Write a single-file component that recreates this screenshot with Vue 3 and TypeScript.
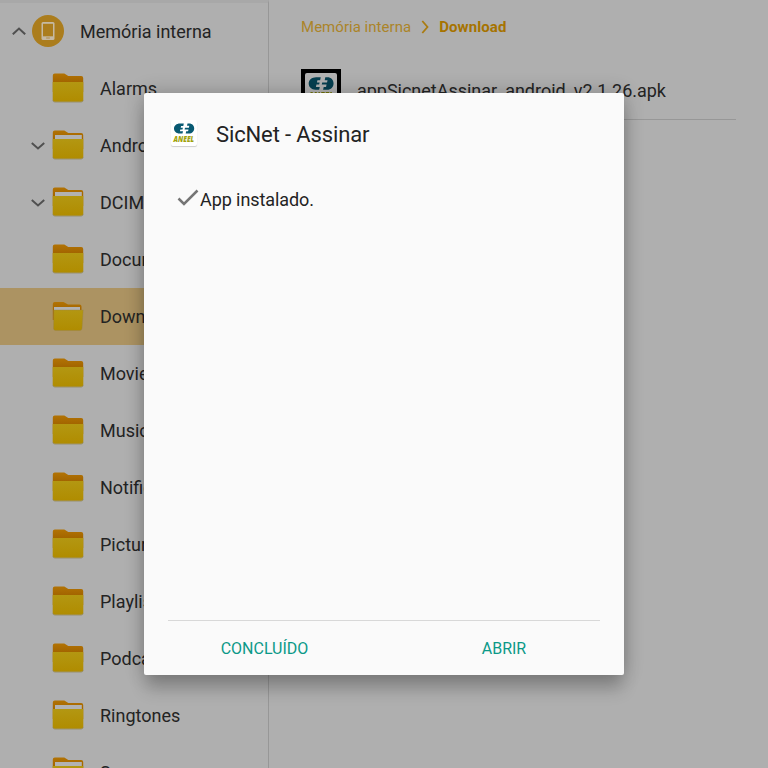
<script setup lang="ts">
type FolderKind = 'empty' | 'filled' | 'open'

interface Folder {
  name: string
  kind: FolderKind
  expandable?: boolean
  selected?: boolean
}

const folders: Folder[] = [
  { name: 'Alarms', kind: 'empty' },
  { name: 'Android', kind: 'filled', expandable: true },
  { name: 'DCIM', kind: 'filled', expandable: true },
  { name: 'Documents', kind: 'empty' },
  { name: 'Download', kind: 'open', selected: true },
  { name: 'Movies', kind: 'empty' },
  { name: 'Music', kind: 'empty' },
  { name: 'Notifications', kind: 'empty' },
  { name: 'Pictures', kind: 'empty' },
  { name: 'Playlists', kind: 'empty' },
  { name: 'Podcasts', kind: 'empty' },
  { name: 'Ringtones', kind: 'filled' },
  { name: 'Samsung', kind: 'filled' },
]
</script>

<template>
  <div class="screen">
    <svg class="defs" width="0" height="0" aria-hidden="true">
      <defs>
        <linearGradient id="front" x1="0" y1="0" x2="0" y2="1">
          <stop offset="0" stop-color="#b39712" />
          <stop offset="1" stop-color="#b08c00" />
        </linearGradient>
        <linearGradient id="back" x1="0" y1="0" x2="0" y2="1">
          <stop offset="0" stop-color="#b27304" />
          <stop offset=".45" stop-color="#a36500" />
        </linearGradient>
        <symbol id="aneel" viewBox="0 0 26 26">
          <path d="M12.800 3.500H9C5.500 3.500 3 5.800 3 8.600s2.200 5 5.500 5h3l.5-2.300H8.900l.4-1.900h2.200l.4-1.700H9.700l.4-1.800h2.200z" />
          <path d="M16.500 3.500h1.600c3.200 0 5.100 2.200 5.100 5s-2.200 5.100-5.200 5.100h-3.300l.5-2.300h1.900l.4-1.900h-3.900l.4-1.700h3.900l.4-1.900H16z" />
          <text x="12.800" y="21.800" text-anchor="middle" textLength="20.500" lengthAdjust="spacingAndGlyphs">ANEEL</text>
        </symbol>
      </defs>
    </svg>

    <aside class="sidebar">
      <div class="row root">
        <svg class="root-chevron" width="14" height="8" viewBox="0 0 14 8"><path d="M.8 7.300L7 1.600l6.200 5.700" /></svg>
        <svg class="storage" width="32" height="32" viewBox="0 0 32 32">
          <circle cx="16" cy="16" r="16" fill="#ab7d1d" />
          <rect x="9.500" y="7" width="13" height="18" rx="1.500" fill="#c5b9a3" />
          <rect x="11" y="8.800" width="10" height="12.500" fill="#ab7d1d" />
          <rect x="14" y="22.300" width="4" height="1.400" rx=".6" fill="#b89b64" />
        </svg>
        <span class="label">Memória interna</span>
      </div>
      <div v-for="f in folders" :key="f.name" class="row child" :class="{ selected: f.selected }">
        <span class="toggle">
          <svg v-if="f.expandable" width="14" height="8" viewBox="0 0 14 8"><path d="M.8 1L7 6.400 13.200 1" /></svg>
        </span>
        <svg class="folder" width="32" height="32" viewBox="0 0 32 32">
          <g v-if="f.kind === 'open'">
            <path d="M.8 4Q.8 2 2.800 2h8.700l4.500 2.500h11.500q2 0 2 2V20H.8z" fill="url(#back)" />
            <path d="M2 7h26v8H2z" fill="#b2b2b2" />
            <path d="M1.800 10H31.200L30 28.500q-.2 2-2 2H3.500q-2 0-2-2z" fill="url(#front)" stroke="#98834a" stroke-width=".4" />
          </g>
          <g v-else>
            <path d="M.8 3.500q0-2 2-2h9.500L16.300 4h12.900q2 0 2 2v14H.8z" fill="url(#back)" />
            <path v-if="f.kind === 'filled'" d="M3 6h26.800v6H3z" fill="#b2b2b2" />
            <path d="M.7 10h30.600v17.500q0 2.200-2.200 2.200H2.900Q.7 29.700.7 27.500z" fill="url(#front)" />
            <path d="M.7 28q.3 2.100 2.200 2.100h26.200q1.900 0 2.200-2.100" fill="none" stroke="#8f8151" stroke-width=".6" />
          </g>
        </svg>
        <span class="label">{{ f.name }}</span>
      </div>
    </aside>

    <main class="content">
      <nav class="breadcrumb">
        <span class="crumb">Memória interna</span>
        <svg width="8" height="14" viewBox="0 0 8 14"><path d="M1.300 1l5.200 6-5.200 6" /></svg>
        <span class="crumb current">Download</span>
      </nav>
      <div class="file">
        <span class="file-icon">
          <svg class="logo dim" width="32" height="32"><use href="#aneel" /></svg>
        </span>
        <span class="file-name">appSicnetAssinar_android_v2.1.26.apk</span>
      </div>
    </main>

    <section class="dialog" role="dialog">
      <header class="dialog-head">
        <svg class="logo app-icon" width="26" height="26"><use href="#aneel" /></svg>
        <h1>SicNet - Assinar</h1>
      </header>
      <div class="status">
        <svg width="22" height="18" viewBox="0 0 22 18"><path d="M1.500 9.500l5.500 5.500L20.500 1.500" /></svg>
        <span>App instalado.</span>
      </div>
      <footer class="actions">
        <button type="button">CONCLUÍDO</button>
        <button type="button">ABRIR</button>
      </footer>
    </section>
  </div>
</template>

<style>
body {
  margin: 0;
  overflow: hidden;
}
</style>

<style scoped>
.screen {
  position: relative;
  display: flex;
  width: 768px;
  height: 768px;
  overflow: hidden;
  background: #afafaf;
  color: #232323;
  font-family: Roboto, "Liberation Sans", sans-serif;
}
.defs {
  position: absolute;
}
.sidebar {
  box-sizing: border-box;
  flex: none;
  width: 269px;
  height: 768px;
  overflow: hidden;
  border-top: 3px solid #a8a8a8;
  border-right: 1px solid #979797;
}
.row {
  display: flex;
  align-items: center;
  height: 57px;
  font-size: 18px;
  white-space: nowrap;
}
.root {
  padding-left: 12px;
}
.storage {
  margin: -1px 16px 0 6px;
}
.root-chevron {
  margin-top: -1px;
}
.root-chevron path,
.toggle path {
  fill: none;
  stroke: #505050;
  stroke-width: 2;
}
.child {
  padding-left: 31px;
}
.selected {
  background: #ac9362;
}
.toggle {
  display: flex;
  width: 21px;
}
.folder {
  margin: -2px 16px 0 0;
}
.content {
  flex: 1;
  padding: 0 32px;
}
.breadcrumb {
  display: flex;
  align-items: center;
  height: 54px;
  font-size: 15px;
}
.breadcrumb svg {
  margin: 0 10px;
}
.breadcrumb path {
  fill: none;
  stroke: #aa7b10;
  stroke-width: 1.8;
}
.crumb {
  color: #ab8429;
  letter-spacing: 0.03px;
}
.current {
  color: #a67300;
  font-weight: 700;
  letter-spacing: 0.1px;
}
.file {
  display: flex;
  align-items: center;
  box-sizing: border-box;
  height: 66px;
  padding-top: 5px;
  border-bottom: 1px solid #979797;
  font-size: 18px;
}
.file-icon {
  box-sizing: border-box;
  width: 40px;
  height: 40px;
  margin: 0 16px 0 0;
  padding: 4px;
  background: #000;
}
.file-name {
  padding-top: 2px;
  letter-spacing: -0.02px;
}
.logo {
  display: block;
  border-radius: 2px;
  fill: #095a73;
}
#aneel text {
  fill: #a0a20b;
  font: italic 800 7.8px "Open Sans", sans-serif;
}
.dim {
  background: #fff;
  filter: brightness(0.7);
}
.dialog {
  position: absolute;
  top: 93px;
  left: 144px;
  display: flex;
  flex-direction: column;
  box-sizing: border-box;
  width: 480px;
  height: 582px;
  padding: 0 24px;
  border-radius: 2px;
  background: #fafafa;
  box-shadow: 0 16px 16px -2px rgba(0, 0, 0, 0.2), 0 0 20px rgba(0, 0, 0, 0.24);
}
.dialog-head {
  display: flex;
  align-items: center;
  height: 82px;
  padding-left: 3px;
}
.app-icon {
  margin-top: -2px;
  background: #fff;
  box-shadow: 0 1px 1px rgba(0, 0, 0, 0.18);
}
h1 {
  margin: 0 0 0 19px;
  font-size: 22px;
  font-weight: 400;
  letter-spacing: -0.13px;
}
.status {
  display: flex;
  align-items: center;
  height: 48px;
  padding-left: 9px;
  font-size: 18px;
  letter-spacing: -0.08px;
}
.status svg {
  margin: -2px 1px 0 0;
}
.status path {
  fill: none;
  stroke: #757575;
  stroke-width: 2.5;
}
.actions {
  display: flex;
  height: 54px;
  margin-top: auto;
  border-top: 1px solid #d8d8d8;
}
.actions button {
  flex: 0 0 192px;
  padding: 0 0 0 1px;
  border: 0;
  background: none;
  color: #0b9988;
  font: 400 16px Roboto, sans-serif;
}
.actions button + button {
  flex: 0 0 240px;
  padding-left: 48px;
}
</style>
